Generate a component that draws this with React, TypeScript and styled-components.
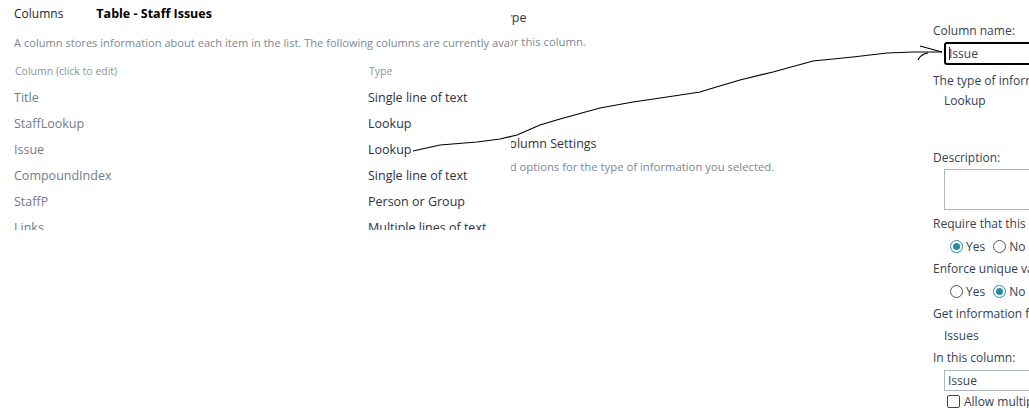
import React from "react";
import styled, { createGlobalStyle } from "styled-components";

// ─── Global ───────────────────────────────────────────────────────────────────

const GlobalStyle = createGlobalStyle`
  html, body { margin: 0; padding: 0; background: #fff; }
  body { font-family: "Open Sans", "Liberation Sans", sans-serif; }
`;

// ─── Layout ───────────────────────────────────────────────────────────────────

const Page = styled.div`
  position: relative;
  width: 1029px;
  height: 408px;
  overflow: hidden;
  background: #fff;
  display: flex;
  align-items: flex-start;
`;

const ListPanel = styled.div`
  width: 511px;
  height: 230px;
  flex-shrink: 0;
  overflow: hidden;
  padding: 5px 0 0 14px;
  box-sizing: border-box;
`;

const SettingsPanel = styled.div`
  width: 414px;
  flex-shrink: 0;
  overflow: hidden;
  white-space: nowrap;
  padding-top: 9px;
`;

const FormPanel = styled.div`
  flex: 1;
  overflow: hidden;
  white-space: nowrap;
  padding: 21px 0 0 8px;
  color: #36414f;
  font-size: 12px;
`;

// ─── List panel ───────────────────────────────────────────────────────────────

const TitleRow = styled.div`
  display: flex;
  align-items: baseline;
  gap: 33px;
  height: 20px;
`;

const Crumb = styled.span`
  font-size: 12px;
  color: #262626;
`;

const ListTitle = styled.span`
  font-size: 12.5px;
  font-weight: 700;
  color: #000;
`;

const Intro = styled.div`
  margin-top: 10px;
  font-size: 11.1px;
  color: #7b8793;
  white-space: nowrap;
`;

const ColumnTable = styled.div`
  display: grid;
  grid-template-columns: 354px auto;
  grid-auto-rows: 26px;
  align-items: center;
  margin-top: 8px;
  white-space: nowrap;
`;

const HeadCell = styled.div`
  font-size: 10.5px;
  color: #8a949e;
  padding-left: 1px;
`;

const NameCell = styled.div`
  font-size: 12.5px;
  color: #727c87;
`;

const TypeCell = styled.div`
  font-size: 12.5px;
  color: #2f2f3f;
`;

// ─── Settings panel (clipped background page) ────────────────────────────────

const SettingsLine = styled.div<{ $shift: number; $gap?: number }>`
  margin-left: ${({ $shift }) => -$shift}px;
  margin-top: ${({ $gap }) => $gap ?? 0}px;
`;

const SectionHead = styled(SettingsLine)`
  font-size: 12.5px;
  color: #333;
`;

const SectionText = styled(SettingsLine)`
  font-size: 11.3px;
  color: #7b8793;
`;

// ─── Form panel ───────────────────────────────────────────────────────────────

const Label = styled.div<{ $gap?: number }>`
  margin-top: ${({ $gap }) => $gap ?? 0}px;
  line-height: 20px;
`;

const Value = styled.div<{ $gap?: number }>`
  margin-top: ${({ $gap }) => $gap ?? 0}px;
  padding-left: 11px;
  line-height: 20px;
`;

const TextBox = styled.div<{ $focused?: boolean; $height: number; $gap?: number }>`
  position: relative;
  margin: ${({ $gap }) => $gap ?? 0}px 0 0 11px;
  width: 220px;
  height: ${({ $height }) => $height}px;
  box-sizing: border-box;
  border: ${({ $focused }) => ($focused ? "2px solid #000" : "1px solid #a9b6c4")};
  border-radius: ${({ $focused }) => ($focused ? 3 : 0)}px;
  padding-left: 3px;
  display: flex;
  align-items: center;
  color: #36414f;
`;

const Caret = styled.span`
  position: absolute;
  left: 3px;
  top: 3px;
  bottom: 3px;
  width: 1px;
  background: #1b2a8a;
`;

const OptionRow = styled.div`
  display: flex;
  align-items: center;
  gap: 3px;
  padding-left: 17px;
  height: 25px;
`;

const Radio = styled.span<{ $checked?: boolean }>`
  flex-shrink: 0;
  width: 13px;
  height: 13px;
  box-sizing: border-box;
  border-radius: 50%;
  border: 1px solid ${({ $checked }) => ($checked ? "#2a8a9e" : "#555")};
  display: inline-flex;
  align-items: center;
  justify-content: center;
  &::after {
    content: "";
    width: 7px;
    height: 7px;
    border-radius: 50%;
    background: ${({ $checked }) => ($checked ? "#2a8a9e" : "transparent")};
  }
`;

const OptionText = styled.span`
  margin-right: 5px;
`;

const CheckRow = styled.div`
  display: flex;
  align-items: center;
  gap: 4px;
  padding-left: 14px;
  margin-top: 2px;
  height: 16px;
`;

const Checkbox = styled.span`
  flex-shrink: 0;
  width: 13px;
  height: 13px;
  box-sizing: border-box;
  border: 1px solid #444;
  border-radius: 2px;
`;

const Scribble = styled.svg`
  position: absolute;
  inset: 0;
  pointer-events: none;
`;

// ─── Data ─────────────────────────────────────────────────────────────────────

const columns: [string, string][] = [
  ["Title", "Single line of text"],
  ["StaffLookup", "Lookup"],
  ["Issue", "Lookup"],
  ["CompoundIndex", "Single line of text"],
  ["StaffP", "Person or Group"],
  ["Links", "Multiple lines of text"],
];

// ─── App ──────────────────────────────────────────────────────────────────────

export default function App() {
  return (
    <Page>
      <GlobalStyle />

      <ListPanel>
        <TitleRow>
          <Crumb>Columns</Crumb>
          <ListTitle>Table - Staff Issues</ListTitle>
        </TitleRow>
        <Intro>
          A column stores information about each item in the list. The following columns are currently available in this list:
        </Intro>
        <ColumnTable>
          <HeadCell>Column (click to edit)</HeadCell>
          <HeadCell>Type</HeadCell>
          {columns.map(([name, type]) => (
            <React.Fragment key={name}>
              <NameCell>{name}</NameCell>
              <TypeCell>{type}</TypeCell>
            </React.Fragment>
          ))}
        </ColumnTable>
      </ListPanel>

      <SettingsPanel>
        <SectionHead $shift={76}>Name and Type</SectionHead>
        <SectionText $shift={78} $gap={8}>Type a name for this column.</SectionText>
        <SectionHead $shift={72} $gap={86}>Additional Column Settings</SectionHead>
        <SectionText $shift={77} $gap={7}>Specify detailed options for the type of information you selected.</SectionText>
      </SettingsPanel>

      <FormPanel>
        <Label>Column name:</Label>
        <TextBox $focused $height={23} $gap={1}>
          <Caret />
          Issue
        </TextBox>
        <Label $gap={6}>The type of information in this column is:</Label>
        <Value>Lookup</Value>
        <Label $gap={37}>Description:</Label>
        <TextBox $height={41} $gap={1} />
        <Label $gap={4}>Require that this column contains information:</Label>
        <OptionRow>
          <Radio $checked />
          <OptionText>Yes</OptionText>
          <Radio />
          <OptionText>No</OptionText>
        </OptionRow>
        <Label>Enforce unique values:</Label>
        <OptionRow>
          <Radio />
          <OptionText>Yes</OptionText>
          <Radio $checked />
          <OptionText>No</OptionText>
        </OptionRow>
        <Label>Get information from:</Label>
        <Value $gap={2}>Issues</Value>
        <Label $gap={2}>In this column:</Label>
        <TextBox $height={21} $gap={2}>Issue</TextBox>
        <CheckRow>
          <Checkbox />
          <span>Allow multiple values</span>
        </CheckRow>
      </FormPanel>

      <Scribble width="1029" height="408" viewBox="0 0 1029 408">
        <path
          d="M413 151 L440 145 L477 142 L500 139 L517 135 L540 125 L560 119 L600 108 L633 102 L667 97 L700 92 L713 88 L740 80 L773 72 L813 61 L853 57 L887 53 L913 52 L942 52"
          fill="none"
          stroke="#000"
          strokeWidth="1.2"
        />
        <path d="M920 46 L942 52" fill="none" stroke="#000" strokeWidth="1.2" />
        <path d="M918 60 Q921 54 928 53" fill="none" stroke="#000" strokeWidth="1.2" />
      </Scribble>
    </Page>
  );
}
